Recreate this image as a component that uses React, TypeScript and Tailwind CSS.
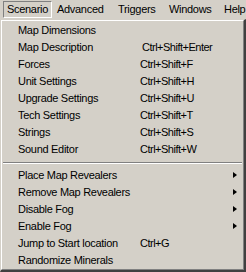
import React from "react";

const topItems = [
  { label: "Map Dimensions", key: "" },
  { label: "Map Description", key: "Ctrl+Shift+Enter", shift: true },
  { label: "Forces", key: "Ctrl+Shift+F" },
  { label: "Unit Settings", key: "Ctrl+Shift+H" },
  { label: "Upgrade Settings", key: "Ctrl+Shift+U" },
  { label: "Tech Settings", key: "Ctrl+Shift+T" },
  { label: "Strings", key: "Ctrl+Shift+S" },
  { label: "Sound Editor", key: "Ctrl+Shift+W" },
];

const bottomItems = [
  { label: "Place Map Revealers", sub: true },
  { label: "Remove Map Revealers", sub: true },
  { label: "Disable Fog", sub: true },
  { label: "Enable Fog", sub: true },
  { label: "Jump to Start location", key: "Ctrl+G" },
  { label: "Randomize Minerals" },
];

type Item = { label: string; key?: string; shift?: boolean; sub?: boolean };

const Row = ({ item }: { item: Item }) => (
  <div className="relative flex h-[17px] items-center whitespace-nowrap">
    <span className="absolute left-[16px]">{item.label}</span>
    {item.key && (
      <span className={`absolute tracking-[-0.5px] ${item.shift ? "left-[140px]" : "left-[138px]"}`}>
        {item.key}
      </span>
    )}
    {item.sub && (
      <span className="absolute left-[231px] top-[5px] h-0 w-0 border-y-[3.5px] border-l-[4px] border-y-transparent border-l-black" />
    )}
  </div>
);

export default function App() {
  return (
    <div
      className="h-[272px] w-[246px] overflow-hidden bg-[#d4d0c8] text-[11px] tracking-[-0.3px] text-black"
      style={{ fontFamily: '"Liberation Sans", Arial, sans-serif' }}
    >
      {/* menu bar */}
      <div className="flex h-[19px] items-start whitespace-nowrap">
        <div className="ml-[3px] mt-[1px] flex h-[17px] w-[49px] items-center border border-b-white border-l-[#808080] border-r-white border-t-[#808080] pl-[3px]">
          Scenario
        </div>
        <div className="flex h-[19px] w-[60px] items-center pl-[5px]">Advanced</div>
        <div className="flex h-[19px] w-[51px] items-center pl-[6px]">Triggers</div>
        <div className="flex h-[19px] w-[55px] items-center pl-[6px]">Windows</div>
        <div className="flex h-[19px] items-center pl-[6px]">Help</div>
      </div>

      {/* dropdown */}
      <div className="h-[253px] w-[246px] border-b-2 border-l border-r-2 border-t border-b-[#404040] border-l-[#d4d0c8] border-r-[#404040] border-t-[#d4d0c8]">
        <div className="h-full border-b border-l border-r border-t border-b-[#808080] border-l-white border-r-[#808080] border-t-white pt-[1px]">
          {topItems.map((it) => (
            <Row key={it.label} item={it} />
          ))}
          <div className="mx-[1px] mb-[3px] mt-[4px] h-[2px] border-b border-t border-b-white border-t-[#808080]" />
          {bottomItems.map((it) => (
            <Row key={it.label} item={it} />
          ))}
        </div>
      </div>
    </div>
  );
}
